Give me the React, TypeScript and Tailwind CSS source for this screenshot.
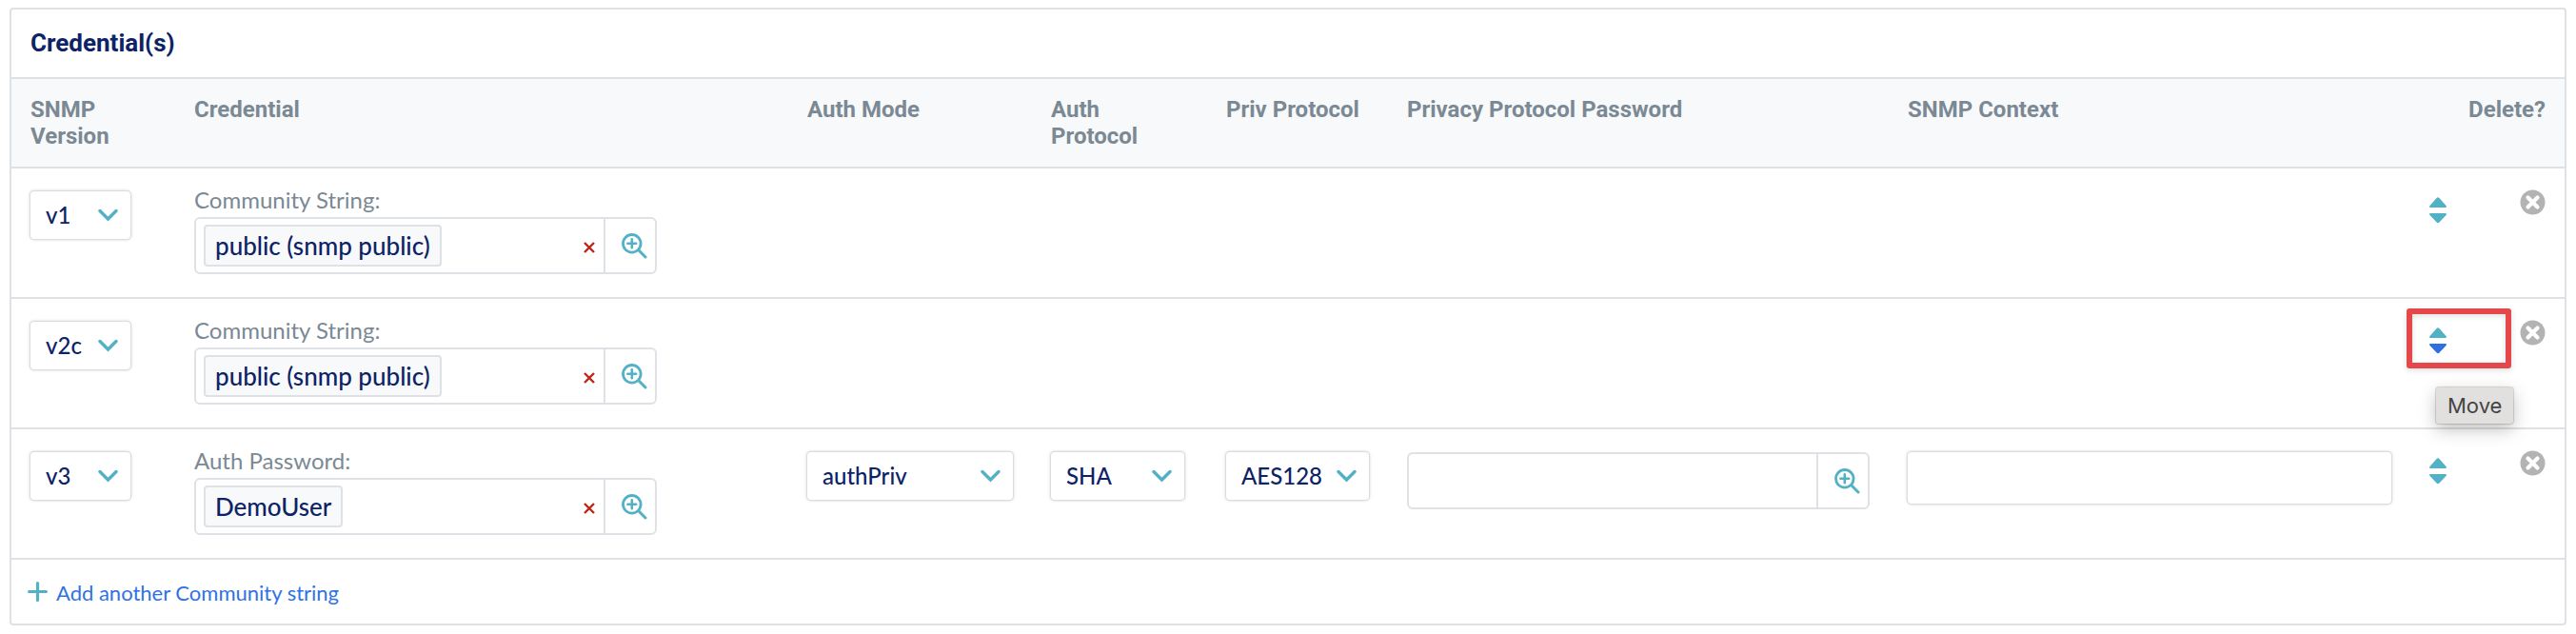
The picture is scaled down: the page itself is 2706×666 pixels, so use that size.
import React from "react";

type Row = {
  id: string;
  version: string;
  label: string;
  credential: string;
  auth?: { mode: string; protocol: string; priv: string };
  moving?: boolean;
};

const rows: Row[] = [
  { id: "r1", version: "v1", label: "Community String:", credential: "public (snmp public)" },
  { id: "r2", version: "v2c", label: "Community String:", credential: "public (snmp public)", moving: true },
  {
    id: "r3",
    version: "v3",
    label: "Auth Password:",
    credential: "DemoUser",
    auth: { mode: "authPriv", protocol: "SHA", priv: "AES128" },
  },
];

const versions = ["v1", "v2c", "v3"];
const modes = ["noAuthNoPriv", "authNoPriv", "authPriv"];
const authProtocols = ["MD5", "SHA"];
const privProtocols = ["DES", "AES128"];

function Select({ label, value, options }: { label: string; value: string; options: string[] }) {
  return (
    <div className="relative">
      <select
        aria-label={label}
        defaultValue={value}
        className="block h-[50px] w-full appearance-none rounded bg-white pr-9 pl-4 text-2xl font-medium text-[#0d2366] shadow-[0_0_0_1px_#dcdcdc,0_0_3px_1px_#d4d4d4]"
      >
        {options.map((o) => (
          <option key={o}>{o}</option>
        ))}
      </select>
      <svg
        className="pointer-events-none absolute top-[18px] right-[13px] h-[14px] w-[21px]"
        viewBox="0 0 21 14"
        fill="none"
        stroke="#52b1c5"
        strokeWidth="3.4"
        strokeLinecap="round"
        aria-hidden="true"
      >
        <path d="M2 2.5 10.5 11 19 2.5" />
      </svg>
    </div>
  );
}

function ZoomInIcon() {
  return (
    <svg className="h-[27px] w-[27px]" viewBox="0 0 27 27" fill="none" stroke="#52b1c5" strokeLinecap="round" aria-hidden="true">
      <circle cx="10.8" cy="10.8" r="9.3" strokeWidth="2.8" />
      <path d="M10.8 6.4v8.8M6.4 10.8h8.8" strokeWidth="2.6" />
      <path d="M17.8 17.8 25 25" strokeWidth="3" />
    </svg>
  );
}

function LookupField({ id, value, label }: { id: string; value?: string; label?: string }) {
  return (
    <div className="flex h-[60px] w-full overflow-hidden rounded-md border-2 border-[#dee2e6] bg-white">
      {value ? (
        <div className="flex min-w-0 flex-1 items-center justify-between pr-[9px] pl-2">
          <output
            id={id}
            className="flex h-11 items-center rounded-sm border-2 border-[#dee2e6] bg-[#f8f9fb] px-[10px] text-[26px] font-medium whitespace-nowrap text-[#0d2366]"
          >
            {value}
          </output>
          <button type="button" aria-label={"Remove " + value} className="mt-1">
            <svg className="h-3 w-3" viewBox="0 0 12 12" stroke="#bf2517" strokeWidth="2.4" aria-hidden="true">
              <path d="M1 1 11 11M11 1 1 11" />
            </svg>
          </button>
        </div>
      ) : (
        <input id={id} type="password" aria-label={label} className="min-w-0 flex-1 px-3 text-2xl text-[#0d2366] outline-none" />
      )}
      <button type="button" aria-label="Look up" className="flex w-[54px] items-center justify-end border-l-2 border-[#dee2e6] pr-2">
        <ZoomInIcon />
      </button>
    </div>
  );
}

function MoveControl({ moving }: { moving?: boolean }) {
  return (
    <div className="relative flex flex-col gap-[6px] pt-[6px]">
      <button type="button" aria-label="Move up" className="block">
        <svg className="h-[11px] w-[18px]" viewBox="0 0 18 11" fill="#52b1c5" aria-hidden="true">
          <path d="M1 11C.2 11-.3 9.8.5 9L7.6 1C8.5 0 9.5 0 10.4 1L17.5 9c.8.8.3 2-.5 2z" />
        </svg>
      </button>
      <button type="button" aria-label="Move down" className="block">
        <svg className="h-[11px] w-[18px]" viewBox="0 0 18 11" fill={moving ? "#2f6fe4" : "#52b1c5"} aria-hidden="true">
          <path d="M1 0C.2 0-.3 1.2.5 2L7.6 9.5C8.5 10.5 9.5 10.5 10.4 9.5L17.5 2c.8-.8.3-2-.5-2z" />
        </svg>
      </button>
      {moving && (
        <>
          <div className="pointer-events-none absolute -top-[14px] -left-6 h-[63px] w-[110px] rounded-[3px] border-6 border-[#e5484b] shadow-[0_2px_6px_rgba(0,0,0,0.12),inset_0_2px_6px_rgba(0,0,0,0.12)]" />
          <div
            role="tooltip"
            className="absolute top-[69px] left-[7px] z-10 flex h-[38px] items-center rounded-[3px] bg-[#e1e0de] px-3 font-[Inter,sans-serif] text-[22px] text-[#444444] shadow-[0_0_1px_1px_rgba(0,0,0,0.15),0_6px_18px_rgba(0,0,0,0.25)]"
          >
            Move
          </div>
        </>
      )}
    </div>
  );
}

function Head({ children, className = "" }: { children?: React.ReactNode; className?: string }) {
  return (
    <th scope="col" className={"border-b-2 border-[#dee2e6] bg-[#f8f9fb] px-5 py-[18px] align-top font-bold " + className}>
      {children}
    </th>
  );
}

function Cell({ children, className = "" }: { children?: React.ReactNode; className?: string }) {
  return <td className={"border-b-2 border-[#dee2e6] py-6 align-top " + className}>{children}</td>;
}

export default function App() {
  return (
    <main className="bg-white px-[10px] pt-2 pb-[9px] font-[Lato,sans-serif]">
      <section className="rounded border-2 border-[#dee2e6]">
        <h2 className="border-b-2 border-[#dee2e6] px-5 pt-[19px] pb-5 font-[Roboto,sans-serif] text-[26px] leading-8 font-bold text-[#0d2366]">
          Credential(s)
        </h2>
        <table className="w-full table-fixed border-separate border-spacing-0">
          <colgroup>
            <col className="w-[172px]" />
            <col className="w-[644px]" />
            <col className="w-[256px]" />
            <col className="w-[184px]" />
            <col className="w-[190px]" />
            <col className="w-[526px]" />
            <col />
            <col className="w-[40px]" />
            <col className="w-[122px]" />
          </colgroup>
          <thead className="text-left font-[Roboto,sans-serif] text-2xl leading-7 text-[#7b8994]">
            <tr>
              <Head>SNMP Version</Head>
              <Head>Credential</Head>
              <Head>Auth Mode</Head>
              <Head>Auth Protocol</Head>
              <Head className="whitespace-nowrap">Priv Protocol</Head>
              <Head>Privacy Protocol Password</Head>
              <Head>SNMP Context</Head>
              <Head />
              <Head className="text-right">Delete?</Head>
            </tr>
          </thead>
          <tbody>
            {rows.map((r) => (
              <tr key={r.id}>
                <Cell className="pr-[47px] pl-5">
                  <Select label="SNMP Version" value={r.version} options={versions} />
                </Cell>
                <Cell className="pr-[138px] pl-5">
                  <label htmlFor={r.id} className="block h-[27px] text-2xl leading-[18px] text-[#7b8994]">
                    {r.label}
                  </label>
                  <LookupField id={r.id} value={r.credential} />
                </Cell>
                <Cell className="pr-5 pl-5">{r.auth && <Select label="Auth Mode" value={r.auth.mode} options={modes} />}</Cell>
                <Cell className="pr-6 pl-5">
                  {r.auth && <Select label="Auth Protocol" value={r.auth.protocol} options={authProtocols} />}
                </Cell>
                <Cell className="pr-5 pl-5">
                  {r.auth && <Select label="Priv Protocol" value={r.auth.priv} options={privProtocols} />}
                </Cell>
                <Cell className="pr-5 pl-5">{r.auth && <LookupField id={r.id + "-priv"} label="Privacy Protocol Password" />}</Cell>
                <Cell className="pr-5 pl-5">
                  {r.auth && (
                    <input
                      type="text"
                      aria-label="SNMP Context"
                      className="block h-[54px] w-full rounded bg-white px-4 text-2xl text-[#0d2366] shadow-[0_0_0_1px_#dcdcdc,0_0_3px_1px_#d4d4d4] outline-none"
                    />
                  )}
                </Cell>
                <Cell className="pl-5">
                  <MoveControl moving={r.moving} />
                </Cell>
                <Cell className="pr-5">
                  <button type="button" aria-label="Delete" className="-mt-[2px] ml-auto block">
                    <svg className="h-[27px] w-[27px]" viewBox="0 0 27 27" aria-hidden="true">
                      <circle cx="13.5" cy="13.5" r="13" fill="#b3b3b3" />
                      <path d="M8.5 8.5 18.5 18.5M18.5 8.5 8.5 18.5" stroke="#fff" strokeWidth="4.2" strokeLinecap="round" />
                    </svg>
                  </button>
                </Cell>
              </tr>
            ))}
          </tbody>
        </table>
        <div className="flex h-[67px] items-center px-[17px]">
          <a href="#add" className="flex items-center gap-[9px] text-[22px] text-[#2f72e4]">
            <svg className="h-[21px] w-[21px]" viewBox="0 0 21 21" stroke="#52b1c5" strokeWidth="3.2" strokeLinecap="round" aria-hidden="true">
              <path d="M10.5 1.6v17.8M1.6 10.5h17.8" />
            </svg>
            <span className="pt-[2px]">Add another Community string</span>
          </a>
        </div>
      </section>
    </main>
  );
}
